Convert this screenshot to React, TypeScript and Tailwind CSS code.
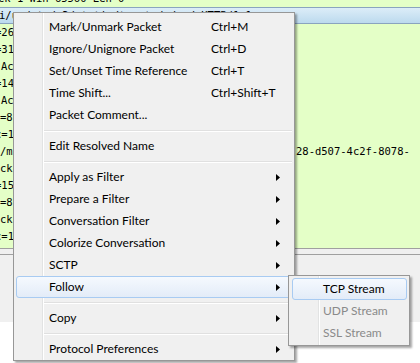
import React from "react";

const rows: { left: string; cls: string; right?: string }[] = [
  { left: "=26", cls: "-ml-[5px]" },
  { left: "=31", cls: "-ml-[5px]" },
  { left: "Ac", cls: "ml-[1px]" },
  { left: "=14", cls: "-ml-[5px]" },
  { left: "Ac", cls: "ml-[1px]" },
  { left: "=8", cls: "ml-0" },
  { left: "c=1", cls: "-ml-[5px]" },
  { left: "/m", cls: "ml-0", right: "28-d507-4c2f-8078-" },
  { left: "ck", cls: "ml-0" },
  { left: "=15", cls: "-ml-[5px]" },
  { left: "=8", cls: "ml-0" },
  { left: "ck", cls: "ml-0" },
  { left: "c=1", cls: "-ml-[5px]" },
];

type Item =
  | { sep: true }
  | { label: string; shortcut?: string; arrow?: boolean; hl?: boolean };

const items: Item[] = [
  { label: "Mark/Unmark Packet", shortcut: "Ctrl+M" },
  { label: "Ignore/Unignore Packet", shortcut: "Ctrl+D" },
  { label: "Set/Unset Time Reference", shortcut: "Ctrl+T" },
  { label: "Time Shift...", shortcut: "Ctrl+Shift+T" },
  { label: "Packet Comment..." },
  { sep: true },
  { label: "Edit Resolved Name" },
  { sep: true },
  { label: "Apply as Filter", arrow: true },
  { label: "Prepare a Filter", arrow: true },
  { label: "Conversation Filter", arrow: true },
  { label: "Colorize Conversation", arrow: true },
  { label: "SCTP", arrow: true },
  { label: "Follow", arrow: true, hl: true },
  { sep: true },
  { label: "Copy", arrow: true },
  { sep: true },
  { label: "Protocol Preferences", arrow: true },
];

function Arrow() {
  return (
    <svg width="4" height="7" viewBox="0 0 4 7" className="block">
      <polygon points="0,0 4,3.5 0,7" fill="#000" />
    </svg>
  );
}

export default function App() {
  return (
    <div className="relative w-[420px] h-[363px] overflow-hidden bg-white">
      {/* packet list */}
      <div className="flex flex-col font-['DejaVu_Sans_Mono','Liberation_Mono',monospace] text-[10.5px] text-black">
        <div className="h-[7px] bg-[#e4ffc7] overflow-hidden relative">
          <div className="absolute left-[-2px] top-[-10px] leading-[17px] whitespace-nowrap">
            ck=1 Win=65560 Len=0
          </div>
        </div>
        <div className="h-[17px] border-y border-[#8aa4bf] bg-gradient-to-b from-[#dcedf8] to-[#bcdaee] flex items-center whitespace-nowrap overflow-hidden">
          <span className="-ml-[1px]">i/update/v3/static/trustedr/en/ HTTP/1.1</span>
        </div>
        {rows.map((r, i) => (
          <div
            key={i}
            className="h-[17px] bg-[#e4ffc7] flex items-center whitespace-nowrap overflow-hidden"
          >
            <span className={"inline-block shrink-0 w-[296px] " + r.cls}>{r.left}</span>
            {r.right && <span>{r.right}</span>}
          </div>
        ))}
        <div className="h-[3px] bg-[#e4ffc7]" />
        <div className="h-px bg-[#a0a0a0]" />
        <div className="h-[5px] bg-[#f0f0f0]" />
        <div className="h-px bg-[#a0a0a0]" />
        <div className="h-[67px] bg-[#f0f0f0]" />
      </div>

      {/* context menu */}
      <div className="absolute left-[13px] top-[12px] w-[282px] border border-[#979797] bg-[#f0f0f0] pt-[3px] shadow-[2px_2px_2px_rgba(0,0,0,0.35)] font-['Lato','Liberation_Sans',sans-serif] text-[12px] text-black">
        <div className="absolute left-[28px] top-0 bottom-0 w-px bg-[#e2e3e3]" />
        <div className="absolute left-[29px] top-0 bottom-0 w-px bg-white" />
        {items.map((it, i) =>
          "sep" in it ? (
            <div key={i} className="relative h-[9px] ml-[30px] mr-[2px]">
              <div className="absolute left-0 right-0 top-[4px] h-px bg-[#e0e0e0]" />
              <div className="absolute left-0 right-0 top-[5px] h-px bg-white" />
            </div>
          ) : (
            <div
              key={i}
              className={
                "relative h-[22px] mx-[2px] flex items-center pl-[32px] pr-[11px] rounded-[3px] border " +
                (it.hl
                  ? "border-[#a8cbf2] bg-gradient-to-b from-[#f5f9fe] to-[#e3ecf8]"
                  : "border-transparent")
              }
            >
              <span className="w-[162px] whitespace-nowrap">{it.label}</span>
              <span className="flex-1 whitespace-nowrap">{it.shortcut ?? ""}</span>
              {it.arrow && <Arrow />}
            </div>
          )
        )}
      </div>

      {/* submenu */}
      <div className="absolute left-[288px] top-[275px] w-[122px] border border-[#979797] bg-[#f0f0f0] pt-[2px] pb-px shadow-[2px_2px_2px_rgba(0,0,0,0.35)] font-['Lato','Liberation_Sans',sans-serif] text-[12px]">
        <div className="absolute left-[29px] top-0 bottom-0 w-px bg-[#e2e3e3]" />
        <div className="absolute left-[30px] top-0 bottom-0 w-px bg-white" />
        <div className="relative h-[22px] ml-[3px] mr-[2px] flex items-center pl-[30px] rounded-[3px] border border-[#a8cbf2] bg-gradient-to-b from-[#f5f9fe] to-[#e3ecf8] text-black whitespace-nowrap">
          TCP Stream
        </div>
        <div className="relative h-[22px] ml-[3px] mr-[2px] flex items-center pl-[31px] text-[#8a8a8a] whitespace-nowrap">
          UDP Stream
        </div>
        <div className="relative h-[22px] ml-[3px] mr-[2px] flex items-center pl-[31px] text-[#8a8a8a] whitespace-nowrap">
          SSL Stream
        </div>
      </div>
    </div>
  );
}
